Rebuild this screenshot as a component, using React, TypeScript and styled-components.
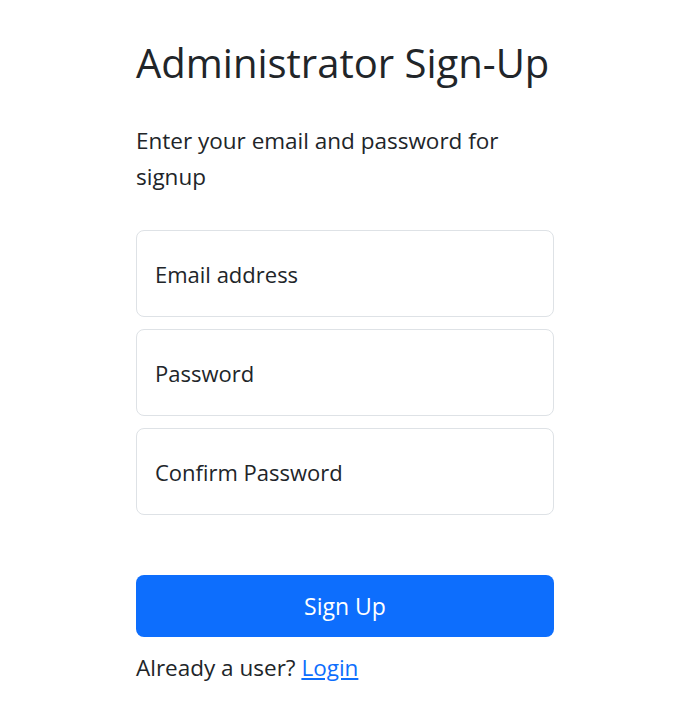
import React from "react";
import styled, { createGlobalStyle } from "styled-components";

const Global = createGlobalStyle`
  html, body { margin: 0; padding: 0; background: #fff; }
  body {
    font-family: "Open Sans", "Noto Sans", sans-serif;
    color: #212529;
    -webkit-font-smoothing: antialiased;
  }
`;

const Page = styled.main`
  padding: 39px 0 0 136px;
`;

const Column = styled.div`
  width: 418px;
  display: flex;
  flex-direction: column;
`;

const Title = styled.h1`
  margin: 0;
  font-size: 40px;
  font-weight: 400;
  line-height: 1.2;
  white-space: nowrap;
`;

const Subtitle = styled.p`
  margin: 36px 0 0;
  font-size: 22.5px;
  line-height: 36px;
`;

const Form = styled.form`
  margin-top: 35px;
  display: flex;
  flex-direction: column;
  gap: 12px;
`;

const Field = styled.input`
  box-sizing: border-box;
  height: 87px;
  width: 100%;
  padding: 0 18px;
  border: 1px solid #dee2e6;
  border-radius: 8px;
  font: inherit;
  font-size: 22px;
  color: #212529;
  background: #fff;
  outline: none;
  &::placeholder {
    color: #212529;
    opacity: 1;
  }
`;

const Submit = styled.button`
  margin-top: 48px;
  height: 62px;
  width: 100%;
  border: none;
  border-radius: 8px;
  background: #0d6efd;
  color: #fff;
  font: inherit;
  font-size: 23px;
  cursor: pointer;
`;

const Footer = styled.p`
  margin: 13px 0 0;
  font-size: 22.5px;
  line-height: 36px;
`;

const LoginLink = styled.a`
  color: #0d6efd;
  text-decoration: underline;
`;

export default function App() {
  return (
    <>
      <Global />
      <Page>
        <Column>
          <Title>Administrator Sign-Up</Title>
          <Subtitle>Enter your email and password for signup</Subtitle>
          <Form onSubmit={(e) => e.preventDefault()}>
            <Field type="email" placeholder="Email address" />
            <Field type="password" placeholder="Password" />
            <Field type="password" placeholder="Confirm Password" />
            <Submit type="submit">Sign Up</Submit>
          </Form>
          <Footer>
            Already a user? <LoginLink href="#">Login</LoginLink>
          </Footer>
        </Column>
      </Page>
    </>
  );
}
